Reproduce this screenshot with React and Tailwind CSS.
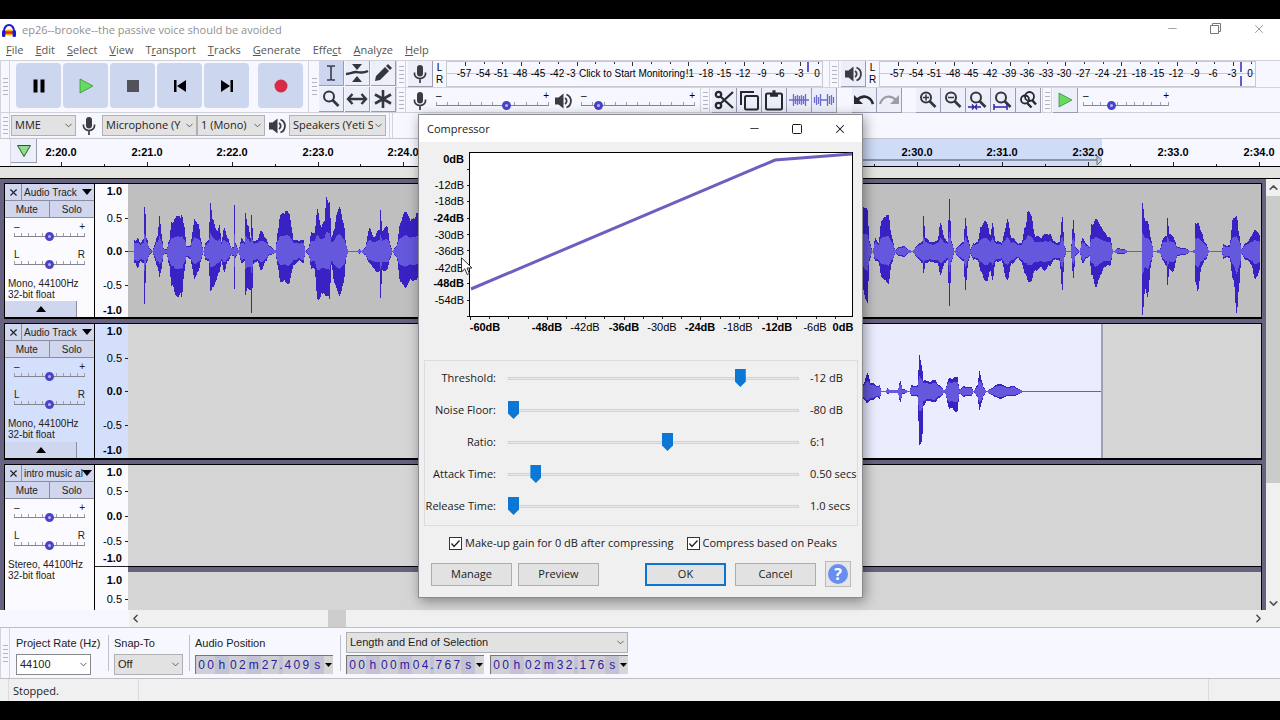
import { ChevronDown, ChevronLeft, ChevronRight, ChevronUp, Minus, Square, X } from 'lucide-react';

const MENUS = [
  ['', 'F', 'ile'], ['', 'E', 'dit'], ['', 'S', 'elect'], ['', 'V', 'iew'], ['T', 'r', 'ansport'],
  ['', 'T', 'racks'], ['', 'G', 'enerate'], ['Effe', 'c', 't'], ['', 'A', 'nalyze'], ['', 'H', 'elp'],
];

// waveform envelopes: [x, peak above centre, peak below centre]
const VOICE = [
  [0, 0, 0], [5, 0, 0], [6, 12, 12], [9, 14, 18], [12, 8, 10], [15, 15, 14], [16, 50, 60], [17, 40, 34], [18, 14, 12],
  [21, 3, 3], [24, 0, 0], [26, 6, 6], [29, 18, 18], [31, 40, 28], [33, 18, 18], [35, 3, 3], [38, 2, 2], [41, 12, 15],
  [43, 33, 38], [47, 36, 46], [53, 42, 52], [56, 25, 20], [58, 6, 6], [62, 6, 8], [64, 20, 18], [66, 38, 32],
  [70, 28, 20], [73, 10, 8], [75, 0, 0], [77, 8, 8], [80, 12, 10], [82, 58, 47], [84, 34, 38], [88, 24, 32],
  [91, 28, 22], [93, 10, 10], [96, 28, 24], [99, 14, 10], [103, 4, 4], [105, 5, 5], [106, 50, 40], [107, 8, 6],
  [110, 1, 1], [113, 14, 12], [116, 10, 10], [117, 42, 48], [120, 28, 42], [122, 14, 40], [123, 38, 64], [125, 12, 14],
  [129, 12, 10], [133, 24, 22], [137, 14, 10], [141, 6, 4], [147, 1, 1], [149, 22, 16], [152, 38, 32], [156, 46, 34],
  [161, 40, 34], [163, 30, 26], [165, 12, 14], [171, 12, 10], [175, 12, 12], [177, 0, 0], [180, 3, 3], [183, 20, 18],
  [186, 22, 20], [189, 44, 50], [192, 30, 52], [196, 32, 44], [198, 58, 48], [201, 58, 56], [203, 15, 14],
  [206, 24, 34], [208, 44, 44], [211, 46, 46], [215, 34, 38], [218, 5, 5], [220, 0, 0], [229, 0, 0], [231, 2, 2],
  [233, 0, 0], [236, 3, 3], [241, 24, 12], [246, 16, 20], [251, 24, 22], [252, 50, 56], [254, 22, 20], [259, 28, 20],
  [262, 6, 6], [264, 0, 0], [268, 6, 6], [272, 30, 32], [275, 44, 40], [281, 38, 34], [286, 34, 30], [289, 46, 32],
  [300, 0, 0], [725, 0, 0], [734, 56, 44], [737, 46, 50], [739, 44, 54], [741, 12, 10], [744, 0, 0], [747, 14, 10],
  [750, 10, 12], [753, 32, 26], [757, 42, 34], [760, 38, 34], [763, 18, 14], [767, 1, 1], [771, 5, 5], [776, 5, 5],
  [781, 1, 1], [784, 0, 0], [788, 6, 6], [791, 8, 8], [794, 12, 14], [795, 40, 24], [797, 14, 12], [805, 9, 11],
  [809, 13, 13], [812, 30, 24], [816, 16, 14], [819, 10, 8], [821, 56, 58], [823, 12, 12], [826, 0, 0], [829, 4, 4],
  [831, 8, 8], [835, 10, 10], [837, 37, 43], [840, 12, 10], [842, 2, 2], [845, 9, 9], [849, 10, 8], [853, 30, 24],
  [856, 32, 30], [859, 30, 32], [862, 18, 22], [864, 30, 30], [867, 12, 12], [873, 9, 9], [877, 26, 28], [879, 34, 30],
  [883, 16, 14], [889, 9, 7], [893, 9, 11], [897, 28, 26], [899, 44, 32], [903, 38, 32], [907, 16, 20], [912, 16, 18],
  [916, 18, 20], [921, 20, 16], [925, 11, 9], [931, 9, 9], [934, 40, 44], [936, 6, 6], [938, 0, 0], [942, 0, 0],
  [945, 33, 28], [947, 4, 4], [951, 0, 0], [954, 14, 12], [959, 7, 7], [961, 4, 4], [963, 30, 26], [967, 34, 38],
  [971, 32, 30], [976, 20, 16], [981, 16, 16], [985, 0, 0], [989, 3, 2], [995, 2, 2], [1001, 0, 0], [1013, 0, 0],
  [1014, 52, 68], [1017, 36, 44], [1019, 32, 48], [1023, 12, 12], [1025, 0, 0], [1031, 1, 1], [1035, 14, 10],
  [1038, 18, 16], [1039, 40, 40], [1041, 18, 18], [1045, 16, 22], [1049, 4, 4], [1056, 3, 3], [1063, 0, 0],
  [1066, 1, 1], [1067, 32, 34], [1069, 34, 46], [1073, 20, 16], [1077, 9, 9], [1081, 0, 0], [1093, 0, 0],
  [1095, 7, 7], [1101, 6, 6], [1105, 40, 34], [1108, 38, 66], [1111, 16, 34], [1113, 3, 3], [1117, 8, 8],
  [1123, 16, 14], [1127, 25, 32], [1132, 16, 18],
];

const CLIP = [
  [560, 0, 0], [730, 2, 2], [735, 8, 8], [739, 19, 12], [743, 9, 9], [749, 6, 6], [751, 7, 8], [753, 0, 0], [757, 0, 0],
  [759, 3, 2], [762, 1, 1], [769, 1, 1], [772, 12, 12], [774, 2, 2], [781, 0, 0], [783, 6, 4], [789, 6, 5],
  [791, 38, 56], [793, 30, 58], [794, 25, 52], [795, 12, 16], [798, 11, 10], [802, 11, 11], [807, 12, 11], [811, 6, 6],
  [816, 1, 1], [821, 14, 18], [827, 15, 21], [829, 15, 21], [831, 2, 2], [835, 5, 5], [843, 4, 4], [845, 0, 0],
  [849, 6, 5], [851, 22, 20], [853, 14, 14], [855, 4, 4], [858, 0, 0], [863, 3, 3], [869, 8, 7], [875, 7, 7],
  [879, 4, 4], [884, 6, 5], [889, 3, 3], [895, 0, 0], [973, 0, 0],
];

const columns = (points, mid, level) => {
  let d = '';
  for (let i = 1; i < points.length; i++) {
    const [x0, u0, d0] = points[i - 1];
    const [x1, u1, d1] = points[i];
    for (let x = x0; x < x1; x++) {
      const s = (x - x0) / (x1 - x0);
      const t = s * s * (3 - 2 * s);
      const rough = 0.8 + 0.15 * Math.abs(Math.sin(x * 12.9898));
      const up = Math.round(level((u0 + (u1 - u0) * t) * rough));
      const down = Math.round(level((d0 + (d1 - d0) * t) * rough));
      d += `M${x + 0.5} ${mid - up}V${mid + down + 1}`;
    }
  }
  return d;
};

const Waveform = ({ points, mid }) => (
  <svg width="1132" height="134" className="block shrink-0" shapeRendering="crispEdges">
    <path d={columns(points, mid, (h) => h)} stroke="#3822c4" />
    <path d={columns(points, mid, (h) => Math.min(h * 0.75, 5 + h * 0.27))} stroke="#6558dc" />
  </svg>
);

const Grip = ({ className = '' }) => (
  <div className={`flex w-[10px] shrink-0 flex-col items-center justify-center gap-[3px] border-x border-[#d4d4dc] ${className}`}>
    {[0, 1, 2, 3, 4].map((n) => <span key={n} className="h-px w-[5px] bg-[#b4b4c0]" />)}
  </div>
);

const Mic = ({ className = '' }) => (
  <svg width="16" height="20" viewBox="0 0 16 20" className={className} fill="none" stroke="#3a3c42" strokeWidth="2">
    <rect x="5" y="1" width="6" height="11.500" rx="3" fill="#3a3c42" stroke="none" />
    <path d="M2.500 8.500v1.500a5.500 4.500 0 0 0 11 0V8.500M8 14.500V19" strokeWidth="1.700" />
  </svg>
);

const Speaker = () => (
  <svg width="18" height="18" viewBox="0 0 18 18" fill="none" stroke="#3a3c42" strokeWidth="1.800">
    <path d="M1 5.500h3.500L9.500 1.500v15l-5-4H1z" fill="#3a3c42" stroke="none" />
    <path d="M11 6a3.500 3.500 0 0 1 0 6M12.500 2.500a7 7 0 0 1 0 13" />
  </svg>
);

const ToolButton = ({ label, active, children }) => (
  <button
    aria-label={label}
    className={`flex h-[25px] w-[25px] items-center justify-center border-r border-b border-[#9a9cb0] ${active ? 'bg-[#cdd6f1]' : 'bg-[#eceefa]'}`}
  >
    {children}
  </button>
);

const BigButton = ({ label, className = '', children }) => (
  <button aria-label={label} className={`flex h-[45px] w-[45px] items-center justify-center rounded-sm bg-[#cdd6ef] ${className}`}>
    <svg width="16" height="16" viewBox="0 0 16 16">{children}</svg>
  </button>
);

// Thin ruler with a round knob
const MiniSlider = ({ label, value, ends = ['–', '+'], className }) => (
  <div className={`grid h-[18px] ${className}`}>
    <div className="flex justify-between self-start font-['Liberation_Sans',Arial,sans-serif] text-[10px] leading-[8px] [grid-area:1/1]">
      <span>{ends[0]}</span>
      <span>{ends[1]}</span>
    </div>
    <div className="mb-1 flex h-1 items-end justify-between self-end border-b border-[#85858f] [grid-area:1/1]">
      {[4, 1, 1, 1, 1, 1, 1, 1, 1, 1, 4].map((n, i) => <span key={i} className="h-[3px] w-px bg-[#a0a0a8]" />)}
    </div>
    <input
      type="range"
      aria-label={label}
      defaultValue={value}
      className="h-[9px] w-full appearance-none self-end bg-transparent [grid-area:1/1] [&::-webkit-slider-thumb]:size-[9px] [&::-webkit-slider-thumb]:appearance-none [&::-webkit-slider-thumb]:rounded-full [&::-webkit-slider-thumb]:border-3 [&::-webkit-slider-thumb]:border-[#4a42c8] [&::-webkit-slider-thumb]:bg-[#b6b8f4]"
    />
  </div>
);

const Select = ({ label, value, className = '', boxClass = 'bg-[#e2e2e2] border-[#b0b0b0]' }) => (
  <div className={`grid items-center ${className}`}>
    <select aria-label={label} className={`h-full w-full appearance-none overflow-hidden border pr-3 pl-[3px] whitespace-nowrap [grid-area:1/1] ${boxClass}`}>
      <option>{value}</option>
    </select>
    <ChevronDown size={11} strokeWidth={2} className="pointer-events-none mr-[2px] justify-self-end text-[#555] [grid-area:1/1]" />
  </div>
);

const DBS = ['-57', '-54', '-51', '-48', '-45', '-42', '-39', '-36', '-33', '-30', '-27', '-24', '-21', '-18', '-15', '-12', '-9', '-6', '-3', '0'];
// the monitoring button hides the middle of the scale
const RECORD_DBS = DBS.map((db, i) => (i > 6 && i < 12 ? '' : { '-39': '-3', '-21': '!1' }[db] ?? db));

const Meter = ({ label, overlay, peak, marks, children }) => (
  <div className="flex h-[26px] items-stretch">
    <button aria-label={label} className="flex w-[25px] items-center justify-center border-r border-b border-[#9a9cb0] bg-[#eceefa]">{children}</button>
    <div className="flex w-[13px] flex-col items-center justify-center font-['Liberation_Sans',Arial,sans-serif] text-[10px] leading-[12px]">
      <span>L</span>
      <span>R</span>
    </div>
    <div className="grid border border-[#c8c8d0]">
      <svg width="375" height="24" className="font-['Liberation_Sans',Arial,sans-serif] text-[10px] [grid-area:1/1]" textAnchor="middle">
        <path d="M0 11.500H375" stroke="#c9c9dc" />
        {marks.map((text, i) => {
          const x = Math.round(18 + i * 18.6);
          const nudge = text === '-3' && i === 6 ? -5 : text === '!1' ? 3 : 0;
          return (
            <g key={i}>
              <path d={`M${x + 0.5} 0V${i % 3 ? 2 : 4}`} stroke="#333" />
              <text x={x - 1 + nudge} y="15">{text}</text>
            </g>
          );
        })}
        <path d={peak} stroke="#6a5ac8" strokeWidth="2" />
      </svg>
      {overlay && (
        <button className="mr-[5px] self-center justify-self-center bg-[#f6f6ff] font-['Liberation_Sans',Arial,sans-serif] text-[10px] leading-4 [grid-area:1/1]">
          Click to Start Monitoring
        </button>
      )}
    </div>
  </div>
);

const Lens = ({ children }) => (
  <svg width="20" height="20" viewBox="0 0 20 20" fill="none" stroke="#33363c" strokeWidth="2">
    <circle cx="8" cy="7.500" r="5" />
    <path d="M11.500 11l6 6" strokeWidth="2.600" />
    {children}
  </svg>
);

const TitleBar = () => (
  <header className="flex h-[22px] items-center justify-between bg-white text-[11px] text-[#8f8f8f]">
    <h1 className="flex items-center gap-1">
      <svg width="18" height="16" viewBox="0 0 18 16" fill="none">
        <path d="M4 9a5 6 0 0 1 10 0" stroke="#1b1bd0" strokeWidth="2" />
        <ellipse cx="9" cy="10.500" rx="4.500" ry="3" fill="#ffb000" />
        <path d="M5 10.500h8" stroke="#e03010" strokeWidth="2.500" />
        <rect x="2" y="8" width="3.500" height="7" rx="1.500" fill="#1b1bd0" />
        <rect x="12.500" y="8" width="3.500" height="7" rx="1.500" fill="#1b1bd0" />
      </svg>
      ep26--brooke--the passive voice should be avoided
    </h1>
    <div className="flex items-center gap-[31px] pr-[14px] pb-[3px]">
      <button aria-label="Minimize"><Minus size={13} strokeWidth={1.5} /></button>
      <button aria-label="Restore">
        <svg width="11" height="11" fill="none" stroke="#777"><path d="M.5 2.500h8v8h-8zM2.500 2.500v-2h8v8h-2" /></svg>
      </button>
      <button aria-label="Close"><X size={14} strokeWidth={1.5} /></button>
    </div>
  </header>
);

const MenuBar = () => (
  <nav className="flex h-[19px] items-center gap-3 bg-white pb-px pl-[6px] text-[11px] text-[#555]">
    {MENUS.map(([a, b, c]) => (
      <button key={a + b + c}>{a}<u>{b}</u>{c}</button>
    ))}
  </nav>
);

const Transport = () => (
  <div className="flex items-center border-r border-[#d4d4dc] pr-[5px]">
    <Grip className="mr-[6px] self-stretch" />
    <div className="flex gap-[2px] pb-[2px]">
      <BigButton label="Pause"><path d="M2.500 1.500h4v13h-4zM9.500 1.500h4v13h-4z" /></BigButton>
      <BigButton label="Play"><path d="M2 1l13 7-13 7z" fill="#63dd5b" stroke="#3b7d3b" strokeWidth=".7" /></BigButton>
      <BigButton label="Stop"><path d="M2 2h12v12H2z" fill="#50535c" /></BigButton>
      <BigButton label="Skip to Start"><path d="M2 2h2.500v12H2zM14 2v12L5 8z" /></BigButton>
      <BigButton label="Skip to End"><path d="M11.500 2H14v12h-2.500zM2 2v12l9-6z" /></BigButton>
      <BigButton label="Record" className="ml-[7px]"><circle cx="8" cy="8" r="6.500" fill="#d62c46" /></BigButton>
    </div>
  </div>
);

const Tools = () => (
  <div className="grid grid-cols-3 content-start gap-px">
    <ToolButton label="Selection Tool" active>
      <svg width="16" height="18" viewBox="0 0 16 18" fill="none" stroke="#3a3c48" strokeWidth="1.600"><path d="M4 2h3l1 1 1-1h3M8 3v12M4 16h3l1-1 1 1h3" /></svg>
    </ToolButton>
    <ToolButton label="Envelope Tool">
      <svg width="24" height="20" viewBox="0 0 24 20" fill="#33363c"><path d="M7 1h10l-5 6zM7 19h10l-5-6z" /><path d="M1 11c5 0 6-2 10-2s6 2 12-1" fill="none" stroke="#33363c" strokeWidth="2.400" /></svg>
    </ToolButton>
    <ToolButton label="Draw Tool">
      <svg width="20" height="20" viewBox="0 0 20 20" fill="#33363c"><path d="M2 18l1-5L12 4l4 4-9 9zM13 3l2-2 4 4-2 2z" /></svg>
    </ToolButton>
    <ToolButton label="Zoom Tool"><Lens /></ToolButton>
    <ToolButton label="Time Shift Tool">
      <svg width="22" height="16" viewBox="0 0 22 16" fill="none" stroke="#33363c" strokeWidth="2.400"><path d="M2 8h18M6.500 3L2 8l4.500 5M15.500 3L20 8l-4.500 5" /></svg>
    </ToolButton>
    <ToolButton label="Multi Tool">
      <svg width="20" height="20" viewBox="0 0 20 20" stroke="#33363c" strokeWidth="2.600"><path d="M10 1v18M2 5.500l16 9M2 14.500l16-9" /></svg>
    </ToolButton>
  </div>
);

const EditButtons = () => (
  <div className="flex">
    <ToolButton label="Cut">
      <svg width="20" height="20" viewBox="0 0 20 20" fill="none" stroke="#25282e" strokeWidth="2.200"><circle cx="4.500" cy="4.500" r="2.700" /><circle cx="4.500" cy="15.500" r="2.700" /><path d="M6.500 6.500L19 18M6.500 13.500L19 2" /></svg>
    </ToolButton>
    <ToolButton label="Copy">
      <svg width="21" height="21" viewBox="0 0 21 21" fill="none" stroke="#25282e" strokeWidth="2"><path d="M2 15V2h13" /><rect x="6" y="6" width="13" height="13.500" rx="1.500" /></svg>
    </ToolButton>
    <ToolButton label="Paste">
      <svg width="20" height="21" viewBox="0 0 20 21" fill="none" stroke="#25282e" strokeWidth="2"><rect x="2" y="3.500" width="16" height="16" rx="1.500" /><path d="M6 5h8M8.500 2h3" strokeWidth="3.500" /></svg>
    </ToolButton>
    <ToolButton label="Trim Audio">
      <svg width="22" height="16" viewBox="0 0 22 16" stroke="#6a6ad0" fill="none"><path d="M1 8h20M5.500 2v12M7.500 4v8M9.500 3v10M11.500 4v8M13.500 3v10M15.500 4v8M17.500 2v12" strokeWidth="1.300" /></svg>
    </ToolButton>
    <ToolButton label="Silence Audio">
      <svg width="22" height="16" viewBox="0 0 22 16" stroke="#6a6ad0" fill="none"><path d="M1.500 5v6M3.500 3v10M5.500 5v7M7.500 2v12M7 8h8M14.500 2v12M16.500 4v8M18.500 3v10M20.500 5v6" strokeWidth="1.300" /></svg>
    </ToolButton>
  </div>
);

const ZoomButtons = () => (
  <div className="flex">
    <ToolButton label="Zoom In"><Lens><path d="M5 7.500h6M8 4.500v6" strokeWidth="1.500" /></Lens></ToolButton>
    <ToolButton label="Zoom Out"><Lens><path d="M5 7.500h6" strokeWidth="1.500" /></Lens></ToolButton>
    <ToolButton label="Fit Selection"><Lens><path d="M0 17h13M4 14.500L6 17l-2 2.500M9 14.500L7 17l2 2.500" stroke="#2a22b0" strokeWidth="1.400" /></Lens></ToolButton>
    <ToolButton label="Fit Project"><Lens><path d="M1 17h13M1 14v6M14 14v6" stroke="#2a22b0" strokeWidth="1.500" /></Lens></ToolButton>
    <ToolButton label="Zoom Toggle">
      <svg width="20" height="20" viewBox="0 0 20 20" fill="none" stroke="#25282e" strokeWidth="1.800"><circle cx="11.500" cy="6.500" r="4.500" /><circle cx="7" cy="9.500" r="4" /><path d="M14 10l4 4.500M9 13l4.500 4.500" strokeWidth="2.400" /></svg>
    </ToolButton>
  </div>
);

const Toolbars = () => (
  <div className="flex h-[53px] border-y border-[#d0d0d8]">
    <Transport />
    <Grip className="border-x-0" />
    <Tools />
    <div className="flex flex-1 flex-col">
      <div className="flex border-b border-[#d4d4dc]">
        <Grip className="mr-[2px]" />
        <Meter label="Record Meter" overlay peak="M361 0V10" marks={RECORD_DBS}><Mic /></Meter>
        <Grip className="mr-[2px] ml-[6px]" />
        <Meter label="Playback Meter" peak="M361 0V10M361 14V24" marks={DBS}><Speaker /></Meter>
      </div>
      <div className="flex flex-1 items-center">
        <Grip className="mr-[6px] self-stretch" />
        <Mic className="mr-2" />
        <MiniSlider label="Recording Volume" value={63} className="w-[113px]" />
        <div className="mr-[9px] ml-[5px]"><Speaker /></div>
        <MiniSlider label="Playback Volume" value={12} className="w-[114px]" />
        <Grip className="mr-[2px] ml-[5px] self-stretch" />
        <EditButtons />
        <div className="ml-[15px] flex">
          <ToolButton label="Undo">
            <svg width="22" height="14" viewBox="0 0 22 14" fill="none" stroke="#25282e" strokeWidth="2.600"><path d="M4 7c5-5 13-5 16 4" /><path d="M1 2v9h9z" fill="#25282e" stroke="none" /></svg>
          </ToolButton>
          <ToolButton label="Redo">
            <svg width="22" height="14" viewBox="0 0 22 14" fill="none" stroke="#9c9da4" strokeWidth="2.200"><path d="M2 11C5 2 13 2 18 7" /><path d="M21 2v9h-9z" fill="#9c9da4" stroke="none" /></svg>
          </ToolButton>
        </div>
        <div className="ml-[14px]"><ZoomButtons /></div>
        <Grip className="mr-px ml-px self-stretch" />
        <ToolButton label="Play at Speed">
          <svg width="16" height="16" viewBox="0 0 16 16"><path d="M2 1l13 7-13 7z" fill="#63dd5b" stroke="#3b7d3b" strokeWidth=".7" /></svg>
        </ToolButton>
        <MiniSlider label="Playback Speed" value={31} className="ml-[5px] w-[86px]" />
      </div>
    </div>
  </div>
);

const DeviceBar = () => (
  <div className="flex h-[26px] items-center border-b border-[#c4c4cc] text-[11px] text-[#222]">
    <Grip className="mr-px self-stretch" />
    <Select label="Audio Host" value="MME" className="h-[21px] w-[65px]" />
    <Mic className="mx-[5px]" />
    <Select label="Recording Device" value="Microphone (Y" className="h-[21px] w-[95px]" />
    <Select label="Recording Channels" value="1 (Mono)" className="h-[21px] w-[68px]" />
    <div className="mx-[3px]"><Speaker /></div>
    <Select label="Playback Device" value="Speakers (Yeti S" className="h-[21px] w-[97px]" />
    <span className="ml-[3px] h-full border-x border-[#d4d4dc] pl-[2px]" />
  </div>
);

const SECONDS = Array.from({ length: 15 }, (_, i) => `2:${20 + i}.0`);

const Timeline = () => (
  <div className="flex h-[28px] border-b border-black">
    <div className="w-[11px] border-r border-[#d4d4dc]" />
    <button aria-label="Pinned Play Head" className="flex h-6 w-[26px] items-center justify-center border-r border-b border-[#9a9cb0] bg-[#eceefa]">
      <svg width="16" height="14" viewBox="0 0 16 14"><path d="M1.500 1.500h13l-6.500 11z" fill="#8ce08a" stroke="#2a5a2a" /></svg>
    </button>
    <svg height="27" className="min-w-0 flex-1 font-['Liberation_Sans',Arial,sans-serif] text-[11px] font-bold" textAnchor="middle" shapeRendering="crispEdges">
      <rect x="657" width="408" height="27" fill="#cedcf8" />
      <path d="M657 20.500H1063" stroke="#8c92a6" strokeWidth="2" />
      {SECONDS.map((s, i) => {
        const x = Math.round(24 + i * 85.55);
        return (
          <g key={s}>
            <text x={x} y="17">{s}</text>
            <path d={`M${x + 0.5} 23V27M${x - 42.5} 25V27`} stroke="#222" />
          </g>
        );
      })}
      <path d="M1060 17v9l5-5z" fill="#ccc" stroke="#777" shapeRendering="auto" />
    </svg>
  </div>
);

const RULERS = {
  mono: [['1.0', 7], ['0.5', 34], ['0.0', 67], ['-0.5', 101], ['-1.0', 126]],
  stereo: [['1.0', 7], ['0.5', 26], ['0.0', 51], ['-0.5', 76], ['-1.0', 93], ['1.0', 115], ['0.5', 134]],
};

const LevelRuler = ({ marks, tint }) => (
  <svg width="34" height="145" className={`shrink-0 border-l border-black font-['Liberation_Sans',Arial,sans-serif] text-[11px] ${tint}`} textAnchor="end">
    {marks.map(([text, y], i) => (
      <g key={i}>
        <text x="27" y={y + 4} fontWeight={text.endsWith('5') ? 400 : 700}>{text}</text>
        {(text === '0.0' || text.endsWith('5')) && <path d={`M30 ${y + 0.5}h3`} stroke="#222" />}
      </g>
    ))}
    {marks.length > 5 && <path d="M0 101.500H34" stroke="#222" />}
  </svg>
);

const TrackPanel = ({ name, format, tint, collapse }) => (
  <div className={`flex w-[89px] shrink-0 flex-col font-['Liberation_Sans',Arial,sans-serif] text-[10px] text-[#222] ${tint}`}>
    <div className="flex h-[17px] border-b border-[#8a8ea0] bg-[#cfd6ee]">
      <button aria-label="Close track" className="flex w-[17px] items-center justify-center border-r border-[#8a8ea0]"><X size={11} strokeWidth={2.5} /></button>
      <button className="flex flex-1 items-center justify-between pr-[2px] pl-[2px] whitespace-nowrap">
        {name}
        <svg width="10" height="6" className="-ml-1 shrink-0"><path d="M0 0h10L5 6z" /></svg>
      </button>
    </div>
    <div className="grid h-[17px] grid-cols-2 border-b border-[#8a8ea0] bg-[#cfd6ee]">
      <button className="border-r border-[#8a8ea0]">Mute</button>
      <button>Solo</button>
    </div>
    <div className="flex flex-col gap-[10px] px-[9px] pt-[5px]">
      <MiniSlider label={`${name} gain`} value={50} className="w-full" />
      <MiniSlider label={`${name} pan`} value={50} ends={['L', 'R']} className="w-full" />
    </div>
    <p className="mt-[9px] pl-[3px] leading-[11px] whitespace-pre-line">{format}</p>
    {collapse && (
      <button aria-label="Collapse track" className="mt-auto flex h-4 w-[72px] items-center justify-center border-r border-[#8a8ea0] bg-[#cfd6ee]">
        <svg width="10" height="6"><path d="M0 6h10L5 0z" /></svg>
      </button>
    )}
  </div>
);

const Tracks = () => (
  <main className="flex min-h-0 flex-1 border-t border-black bg-[#67627f]">
    <div className="flex min-w-0 flex-1 flex-col gap-1 overflow-hidden pt-1 pr-1 pl-1">
      <section className="flex h-[136px] shrink-0 overflow-hidden border border-b-2 border-black bg-[#bfbfbf]">
        <TrackPanel name="Audio Track" format={'Mono, 44100Hz\n32-bit float'} tint="bg-[#fafaff]" collapse />
        <LevelRuler marks={RULERS.mono} tint="bg-[#fafaff]" />
        <Waveform points={VOICE} mid={67} />
      </section>
      <section className="flex h-[137px] shrink-0 overflow-hidden border border-b-2 border-black bg-[#d5d5d5]">
        <TrackPanel name="Audio Track" format={'Mono, 44100Hz\n32-bit float'} tint="bg-[#d3dffb]" collapse />
        <LevelRuler marks={RULERS.mono} tint="bg-[#d3dffb]" />
        <div className="w-[975px] shrink-0 overflow-hidden border-r-2 border-[#a0a2b4] bg-linear-to-r from-[#d5d5d5] from-58% to-[#ebedff] to-58%">
          <Waveform points={CLIP} mid={67} />
        </div>
      </section>
      <section className="flex min-h-0 flex-1 overflow-hidden border border-b-0 border-black bg-[#d5d5d5]">
        <TrackPanel name="intro music al" format={'Stereo, 44100Hz\n32-bit float'} tint="bg-[#fafaff]" />
        <LevelRuler marks={RULERS.stereo} tint="bg-[#fafaff]" />
        <div className="flex flex-1 flex-col">
          <div className="h-[101px] shrink-0" />
          <div className="h-[6px] shrink-0 border-t border-black bg-[#67627f]" />
        </div>
      </section>
    </div>
    <div className="flex w-[14px] flex-col items-center bg-[#f0f0f0]">
      <ChevronUp size={13} strokeWidth={3} className="my-[2px] text-[#555]" />
      <div className="h-[287px] w-full bg-[#cacccc]" />
      <ChevronDown size={13} strokeWidth={3} className="mt-auto text-[#555]" />
    </div>
  </main>
);

const TimeField = ({ label, value }) => (
  <div role="group" aria-label={label} className="flex h-[19px] w-[138px] items-stretch border-t border-l border-[#777] bg-[#c9c9cf] pl-px text-[12px] text-[#2a1c9e]">
    {value.split('').map((c, i) => (
      <span
        key={i}
        className={`flex items-center justify-center ${/\d/.test(c) ? 'flex-[2] bg-[#d0d0d4]' : c === '.' ? 'flex-1 bg-[#c2c2d4]' : 'flex-[3] bg-[#c2c2d4]'}`}
      >
        {c}
      </span>
    ))}
    <button aria-label={`${label} format`} className="flex w-[9px] items-center justify-center bg-[#d6d6d6]">
      <svg width="7" height="4"><path d="M0 0h7L3.500 4z" /></svg>
    </button>
  </div>
);

const SelectionBar = () => (
  <div className="flex h-[52px] items-stretch border-y border-[#c0c0c4] font-['Liberation_Sans',Arial,sans-serif] text-[11px] text-[#222]">
    <Grip className="mr-[6px]" />
    <div className="flex w-[92px] flex-col justify-between pt-[5px] pb-[3px]">
      <span className="leading-5">Project Rate (Hz)</span>
      <Select label="Project Rate" value="44100" className="h-[21px] w-[75px]" boxClass="bg-white border-[#888]" />
    </div>
    <div className="my-[7px] border-l border-[#c0c0c8]" />
    <div className="ml-[5px] flex w-[75px] flex-col justify-between pt-[5px] pb-[3px]">
      <span className="leading-5">Snap-To</span>
      <Select label="Snap-To" value="Off" className="h-[21px] w-[69px]" />
    </div>
    <div className="my-[7px] border-l border-[#c0c0c8]" />
    <div className="ml-[5px] flex w-[145px] flex-col justify-between pt-[5px] pb-[4px]">
      <span className="leading-5">Audio Position</span>
      <TimeField label="Audio Position" value="00h02m27.409s" />
    </div>
    <div className="my-[7px] border-l border-[#c0c0c8]" />
    <div className="ml-[5px] flex flex-col justify-between pt-[4px] pb-[4px]">
      <Select label="Selection Mode" value="Length and End of Selection" className="h-[21px] w-[282px]" />
      <div className="flex gap-[6px]">
        <TimeField label="Length" value="00h00m04.767s" />
        <TimeField label="End" value="00h02m32.176s" />
      </div>
    </div>
  </div>
);

const Y_DBS = [[0, 19], [12, 45], [18, 61], [24, 78], [30, 95], [36, 111], [42, 128], [48, 143], [54, 160]];
const X_DBS = [[60, 66], [48, 128], [42, 166], [36, 205], [30, 243], [24, 281], [18, 319], [12, 358], [6, 396], [0, 424]];

const CompressorGraph = () => (
  <svg width="442" height="215" className="block font-['Liberation_Sans',Arial,sans-serif] text-[11px]">
    <rect x="50.500" y="10.500" width="383" height="164" fill="#fff" stroke="#000" />
    <path d="M52 147L356 18L433 12" fill="none" stroke="#6c5fc0" strokeWidth="3" />
    {Y_DBS.map(([db, y]) => (
      <text key={db} x="45" y={y + 2} textAnchor="end" fontWeight={db % 24 ? 400 : 700}>{db ? `-${db}dB` : '0dB'}</text>
    ))}
    {[27, 43, 59, 76, 92, 108, 125, 141, 158, 174].map((y) => <path key={y} d={`M48 ${y + 0.5}h2`} stroke="#222" />)}
    {X_DBS.map(([db, x]) => (
      <text key={db} x={x} y="189" textAnchor="middle" fontWeight={db % 12 ? 400 : 700}>{db ? `-${db}dB` : '0dB'}</text>
    ))}
    {Array.from({ length: 20 }, (_, i) => <path key={i} d={`M${Math.round(51 + i * 19.2) + 0.5} 175v${i % 4 ? 2 : 3}`} stroke="#222" />)}
  </svg>
);

const SETTINGS = [
  ['Threshold:', 81, '-12 dB'],
  ['Noise Floor:', 0, '-80 dB'],
  ['Ratio:', 55, '6:1'],
  ['Attack Time:', 8, '0.50 secs'],
  ['Release Time:', 0, '1.0 secs'],
];

const Check = ({ id, children }) => (
  <label htmlFor={id} className="flex items-center gap-[3px]">
    <span className="grid">
      <input id={id} type="checkbox" defaultChecked className="peer size-[13px] appearance-none border border-[#333] bg-white [grid-area:1/1]" />
      <svg width="13" height="13" fill="none" stroke="#222" strokeWidth="1.300" className="pointer-events-none hidden [grid-area:1/1] peer-checked:block"><path d="M2.500 6.500L5 9.500l5.500-6" /></svg>
    </span>
    {children}
  </label>
);

const dialogButton = 'h-[23px] w-[81px] border bg-[#e2e2e2]';

const CompressorDialog = () => (
  <div role="dialog" aria-label="Compressor" className="absolute top-[114px] left-[418px] w-[445px] border border-[#8a8a90] bg-[#f0f0f0] pb-[10px] text-[11px] leading-4 whitespace-nowrap text-[#1a1a1a] shadow-[2px_3px_12px_rgba(0,0,0,0.4)]">
    <div className="flex h-[27px] items-center justify-between bg-white pr-[15px] pl-2">
      <h2>Compressor</h2>
      <div className="flex items-center gap-[30px]">
        <button aria-label="Minimize"><Minus size={13} strokeWidth={1.5} /></button>
        <button aria-label="Maximize"><Square size={12} strokeWidth={2} /></button>
        <button aria-label="Close"><X size={14} strokeWidth={1.8} /></button>
      </div>
    </div>
    <CompressorGraph />
    <fieldset className="mx-[5px] mt-[3px] flex flex-col border border-[#dcdcdc] pt-px pb-[3px]">
      {SETTINGS.map(([label, value, text]) => (
        <div key={label} className="flex h-8 items-center">
          <label htmlFor={label} className="w-[71px] shrink-0 text-right">{label}</label>
          <div className="ml-3 grid w-[291px] shrink-0 items-center">
            <div className="h-[3px] border border-[#d2d2d2] bg-[#e8e8e8] [grid-area:1/1]" />
            <input
              id={label}
              type="range"
              defaultValue={value}
              className="h-[18px] w-full appearance-none bg-transparent [grid-area:1/1] [&::-webkit-slider-thumb]:h-[18px] [&::-webkit-slider-thumb]:w-[11px] [&::-webkit-slider-thumb]:appearance-none [&::-webkit-slider-thumb]:bg-[#0a78d4] [&::-webkit-slider-thumb]:[clip-path:polygon(0_0,100%_0,100%_70%,50%_100%,0_70%)]"
            />
          </div>
          <output className="ml-[11px]">{text}</output>
        </div>
      ))}
    </fieldset>
    <div className="mt-[9px] flex gap-[13px] pl-[30px]">
      <Check id="makeup">Make-up gain for 0 dB after compressing</Check>
      <Check id="peaks">Compress based on Peaks</Check>
    </div>
    <div className="mt-[10px] flex items-center pr-[11px] pl-3">
      <button className={`${dialogButton} mr-[6px] border-[#adadad]`}>Manage</button>
      <button className={`${dialogButton} border-[#adadad]`}>Preview</button>
      <button className={`${dialogButton} mr-[9px] ml-auto border-2 border-[#0f74cc]`}>OK</button>
      <button className={`${dialogButton} mr-[9px] border-[#adadad]`}>Cancel</button>
      <button aria-label="Help" className="flex size-[26px] items-center justify-center border border-[#bbb] bg-[#e6e6e6]">
        <span className="flex size-[20px] items-center justify-center rounded-full bg-[#6a8df0] text-base font-bold text-white">?</span>
      </button>
    </div>
  </div>
);

export default function App() {
  return (
    <div className="relative flex h-screen flex-col overflow-hidden bg-black py-[19px] font-['Open_Sans','Noto_Sans',sans-serif]">
      <div className="flex min-h-0 flex-1 flex-col bg-[#f7f7ff]">
        <TitleBar />
        <MenuBar />
        <Toolbars />
        <DeviceBar />
        <Timeline />
        <div className="h-[11px] shrink-0 bg-[#e3e3e1]" />
        <Tracks />
        <div className="flex h-[17px] shrink-0 items-center bg-[#f0f0f0]">
          <div className="h-full w-[129px] bg-[#f7f7ff]" />
          <ChevronLeft size={13} strokeWidth={2.5} className="text-[#444]" />
          <div className="ml-[186px] h-full w-[18px] bg-[#cdcdcd]" />
          <ChevronRight size={13} strokeWidth={2.5} className="mr-[15px] ml-auto text-[#444]" />
        </div>
        <SelectionBar />
        <footer className="flex h-[22px] shrink-0 items-center bg-[#f0f0f0] text-[11px] text-[#222]">
          <div className="ml-2 flex h-full w-[131px] items-center border-x border-[#dcdcdc] pt-[2px] pl-1">Stopped.</div>
          <div className="mr-[71px] h-full flex-1 border-r border-[#dcdcdc]" />
        </footer>
      </div>
      <CompressorDialog />
      <svg width="12" height="19" viewBox="0 0 12 19" className="pointer-events-none absolute top-[257px] left-[461px]">
        <path d="M.5.800v14l3.300-3 2.400 5.700 2.200-1-2.400-5.500H11z" fill="#fff" stroke="#333" />
      </svg>
    </div>
  );
}
